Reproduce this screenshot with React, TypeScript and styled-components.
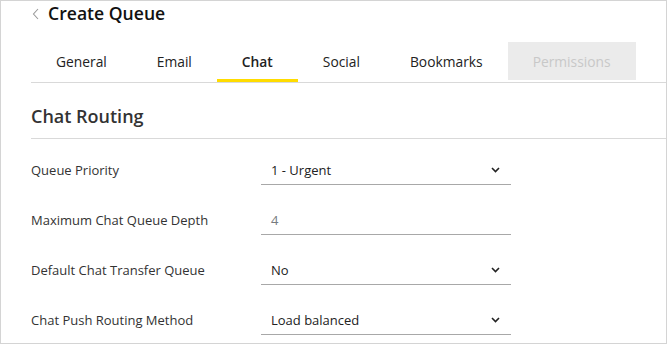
import React from 'react'
import styled, { createGlobalStyle } from 'styled-components'

const GlobalStyle = createGlobalStyle`
  html, body {
    margin: 0;
    padding: 0;
    background: #fff;
  }
  body {
    font-family: 'Open Sans', 'Liberation Sans', sans-serif;
    color: #333;
  }
`

interface IField {
  label: string
  value: string
  kind: 'select' | 'input'
}

const tabs = ['General', 'Email', 'Chat', 'Social', 'Bookmarks', 'Permissions']
const activeTab = 'Chat'
const disabledTab = 'Permissions'

const fields: IField[] = [
  { label: 'Queue Priority', value: '1 - Urgent', kind: 'select' },
  { label: 'Maximum Chat Queue Depth', value: '4', kind: 'input' },
  { label: 'Default Chat Transfer Queue', value: 'No', kind: 'select' },
  { label: 'Chat Push Routing Method', value: 'Load balanced', kind: 'select' }
]

const BackIcon = () => (
  <svg width='8' height='12' viewBox='0 0 8 12'>
    <path d='M6 1 L1.5 6 L6 11' fill='none' stroke='#9a9a9a' strokeWidth='1.1' />
  </svg>
)

const Caret = () => (
  <svg width='9' height='6' viewBox='0 0 9 6'>
    <path d='M1 1 L4.5 4.5 L8 1' fill='none' stroke='#222' strokeWidth='1.6' />
  </svg>
)

const App: React.FC = () => {
  return (
    <>
      <GlobalStyle />
      <Frame>
        <Header>
          <BackButton><BackIcon /></BackButton>
          <Title>Create Queue</Title>
        </Header>

        <TabBar>
          {tabs.map(tab => (
            <Tab key={tab} active={tab === activeTab} disabled={tab === disabledTab}>
              {tab}
            </Tab>
          ))}
        </TabBar>

        <SectionTitle>Chat Routing</SectionTitle>

        <Form>
          {fields.map(field => (
            <Row key={field.label}>
              <Label>{field.label}</Label>
              <Control>
                <Value muted={field.kind === 'input'}>{field.value}</Value>
                {field.kind === 'select' && <Caret />}
              </Control>
            </Row>
          ))}
        </Form>
      </Frame>
    </>
  )
}

export default App

const Frame = styled.div`
  width: 667px;
  height: 344px;
  box-sizing: border-box;
  border: 1px solid #d4d4d4;
  padding-left: 30px;
  overflow: hidden;
`

const Header = styled.header`
  display: flex;
  align-items: center;
  height: 24px;
  gap: 8px;
`

const BackButton = styled.span`
  display: flex;
  align-items: center;
  width: 8px;
  padding-left: 1px;
  margin-top: 1px;
`

const Title = styled.h1`
  margin: 0;
  font-size: 17.6px;
  font-weight: 600;
  color: #111;
  line-height: 24px;
`

const TabBar = styled.nav`
  display: flex;
  margin-top: 17px;
  border-bottom: 1px solid #d9d9d9;
`

const Tab = styled.div<{ active?: boolean, disabled?: boolean }>`
  height: ${p => p.disabled ? '38px' : '40px'};
  margin-bottom: ${p => p.disabled ? '2px' : '0'};
  padding: 0 25px;
  display: flex;
  align-items: center;
  box-sizing: border-box;
  font-size: 13.8px;
  font-weight: ${p => p.active ? 600 : 400};
  color: ${p => p.disabled ? '#c8c8c8' : '#222'};
  background: ${p => p.disabled ? '#ebebeb' : 'transparent'};
  box-shadow: ${p => p.active ? 'inset 0 -3px 0 #ffdc00' : 'none'};
  padding-bottom: ${p => p.disabled ? '0' : '2px'};
`

const SectionTitle = styled.h2`
  margin: 0;
  padding: 21px 0 10px;
  font-size: 18px;
  font-weight: 600;
  line-height: 24px;
  color: #333;
  border-bottom: 1px solid #d9d9d9;
`

const Form = styled.section`
  display: flex;
  flex-direction: column;
  gap: 20px;
  padding-top: 16px;
`

const Row = styled.div`
  display: grid;
  grid-template-columns: 230px 250px;
  align-items: center;
  height: 30px;
`

const Label = styled.label`
  font-size: 13px;
  color: #333;
`

const Control = styled.div`
  display: flex;
  align-items: center;
  justify-content: space-between;
  height: 30px;
  box-sizing: border-box;
  padding: 0 11px 0 10px;
  border-bottom: 1px solid #a8a8a8;
`

const Value = styled.span<{ muted?: boolean }>`
  font-size: 13px;
  color: ${p => p.muted ? '#767b80' : '#222'};
`
